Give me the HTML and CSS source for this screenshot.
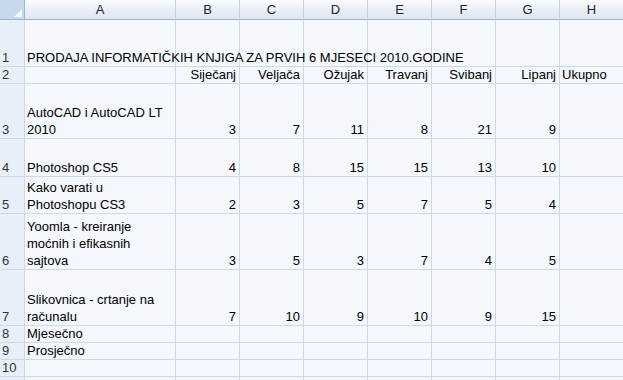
FILE: index.html
```html
<!DOCTYPE html>
<html lang="hr">
<head>
  <meta charset="UTF-8" />
  <title>Prodaja knjiga</title>
  <link rel="stylesheet" href="styles.css">
</head>
<body>

  <table class="sheet">
    <colgroup>
      <col class="col-num">
      <col class="col-a">
      <col class="col-n"><col class="col-n"><col class="col-n"><col class="col-n">
      <col class="col-n"><col class="col-n"><col class="col-n">
    </colgroup>
    <thead>
      <tr class="hdr">
        <th class="corner">
          <svg width="8" height="8" viewBox="0 0 8 8"><polygon points="8,0 8,8 0,8" fill="#f4f8fd"/></svg>
        </th>
        <th>A</th><th>B</th><th>C</th><th>D</th><th>E</th><th>F</th><th>G</th><th>H</th>
      </tr>
    </thead>
    <tbody>
      <tr class="h47">
        <th>1</th>
        <td class="title">PRODAJA INFORMATIČKIH KNJIGA ZA PRVIH 6 MJESECI 2010.GODINE</td>
        <td></td><td></td><td></td><td></td><td></td><td></td><td></td>
      </tr>
      <tr class="h17">
        <th>2</th><td></td>
        <td class="n">Siječanj</td><td class="n">Veljača</td><td class="n">Ožujak</td>
        <td class="n">Travanj</td><td class="n">Svibanj</td><td class="n">Lipanj</td><td>Ukupno</td>
      </tr>
      <tr class="h55">
        <th>3</th><td>AutoCAD i AutoCAD LT<br>2010</td>
        <td class="n">3</td><td class="n">7</td><td class="n">11</td><td class="n">8</td>
        <td class="n">21</td><td class="n">9</td><td></td>
      </tr>
      <tr class="h38">
        <th>4</th><td>Photoshop CS5</td>
        <td class="n">4</td><td class="n">8</td><td class="n">15</td><td class="n">15</td>
        <td class="n">13</td><td class="n">10</td><td></td>
      </tr>
      <tr class="h37">
        <th>5</th><td>Kako varati u<br>Photoshopu CS3</td>
        <td class="n">2</td><td class="n">3</td><td class="n">5</td><td class="n">7</td>
        <td class="n">5</td><td class="n">4</td><td></td>
      </tr>
      <tr class="h56">
        <th>6</th><td>Yoomla - kreiranje<br>moćnih i efikasnih<br>sajtova</td>
        <td class="n">3</td><td class="n">5</td><td class="n">3</td><td class="n">7</td>
        <td class="n">4</td><td class="n">5</td><td></td>
      </tr>
      <tr class="h56">
        <th>7</th><td>Slikovnica - crtanje na<br>računalu</td>
        <td class="n">7</td><td class="n">10</td><td class="n">9</td><td class="n">10</td>
        <td class="n">9</td><td class="n">15</td><td></td>
      </tr>
      <tr class="h17">
        <th>8</th><td>Mjesečno</td>
        <td></td><td></td><td></td><td></td><td></td><td></td><td></td>
      </tr>
      <tr class="h17">
        <th>9</th><td>Prosječno</td>
        <td></td><td></td><td></td><td></td><td></td><td></td><td></td>
      </tr>
      <tr class="h17">
        <th>10</th><td></td>
        <td></td><td></td><td></td><td></td><td></td><td></td><td></td>
      </tr>
      <tr class="h17">
        <th></th><td></td>
        <td></td><td></td><td></td><td></td><td></td><td></td><td></td>
      </tr>
    </tbody>
  </table>

</body>
</html>
```

FILE: styles.css
```css
body {
  margin: 0;
  background: #f4f7fc;
  font-family: "Liberation Sans", Arial, sans-serif;
  font-size: 13px;
  color: #000;
  overflow: hidden;
}

.sheet {
  table-layout: fixed;
  border-collapse: separate;
  border-spacing: 0;
  width: 624px;
}

.col-num { width: 25px; }
.col-a { width: 151px; }
.col-n { width: 64px; }

.sheet td,
.sheet th {
  padding: 0 2px;
  border-right: 1px solid #d0d7e5;
  border-bottom: 1px solid #d0d7e5;
  line-height: 17px;
  vertical-align: bottom;
  text-align: left;
  font-weight: normal;
  white-space: nowrap;
  overflow: visible;
}

.sheet td.n {
  text-align: right;
  padding-right: 3px;
}

/* column letters */
.hdr {
  height: 20px;
}

.hdr th {
  background: linear-gradient(#fafcfe, #e9eef6 55%, #dfe6f0);
  border-right: 1px solid #c4d0df;
  border-bottom: 1px solid #9eb6ce;
  color: #222;
  text-align: center;
  vertical-align: middle;
  line-height: 18px;
}

.hdr th.corner {
  background: #c8d7ea;
  border-right: 1px solid #9eb6ce;
  text-align: right;
  vertical-align: bottom;
  padding: 0 2px 2px 0;
  line-height: 0;
}

/* row numbers */
tbody th {
  background: #e9eff8;
  border-right: 1px solid #9eb6ce;
  border-bottom: 1px solid #c4d0df;
  color: #333;
  text-align: center;
  padding: 0;
}

.h17 { height: 17px; }
.h17 td,
.h17 th { line-height: 16px; }
.h37 { height: 37px; }
.h38 { height: 38px; }
.h47 { height: 47px; }
.h55 { height: 55px; }
.h56 { height: 56px; }
```
